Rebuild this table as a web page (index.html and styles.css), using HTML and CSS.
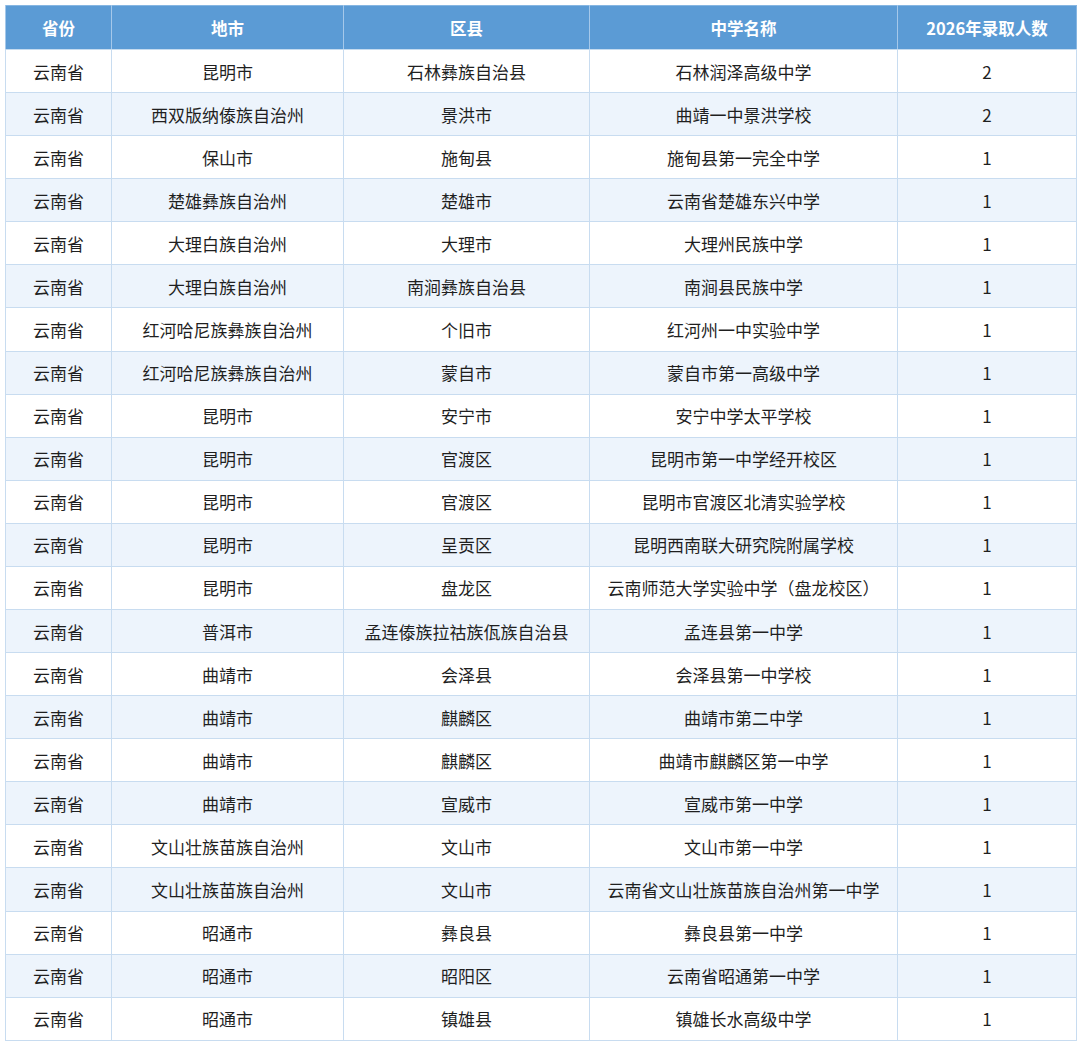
FILE: index.html
```html
<!DOCTYPE html>
<html lang="zh">
<head>
<meta charset="utf-8">
<link rel="stylesheet" href="styles.css">
</head>
<body>
<div class="wrap">
<table class="grid">
<colgroup>
<col class="c1"><col class="c2"><col class="c3"><col class="c4"><col class="c5">
</colgroup>
<thead>
<tr><th>省份</th><th>地市</th><th>区县</th><th>中学名称</th><th>2026年录取人数</th></tr>
</thead>
<tbody>
<tr><td>云南省</td><td>昆明市</td><td>石林彝族自治县</td><td>石林润泽高级中学</td><td>2</td></tr>
<tr><td>云南省</td><td>西双版纳傣族自治州</td><td>景洪市</td><td>曲靖一中景洪学校</td><td>2</td></tr>
<tr><td>云南省</td><td>保山市</td><td>施甸县</td><td>施甸县第一完全中学</td><td>1</td></tr>
<tr><td>云南省</td><td>楚雄彝族自治州</td><td>楚雄市</td><td>云南省楚雄东兴中学</td><td>1</td></tr>
<tr><td>云南省</td><td>大理白族自治州</td><td>大理市</td><td>大理州民族中学</td><td>1</td></tr>
<tr><td>云南省</td><td>大理白族自治州</td><td>南涧彝族自治县</td><td>南涧县民族中学</td><td>1</td></tr>
<tr><td>云南省</td><td>红河哈尼族彝族自治州</td><td>个旧市</td><td>红河州一中实验中学</td><td>1</td></tr>
<tr><td>云南省</td><td>红河哈尼族彝族自治州</td><td>蒙自市</td><td>蒙自市第一高级中学</td><td>1</td></tr>
<tr><td>云南省</td><td>昆明市</td><td>安宁市</td><td>安宁中学太平学校</td><td>1</td></tr>
<tr><td>云南省</td><td>昆明市</td><td>官渡区</td><td>昆明市第一中学经开校区</td><td>1</td></tr>
<tr><td>云南省</td><td>昆明市</td><td>官渡区</td><td>昆明市官渡区北清实验学校</td><td>1</td></tr>
<tr><td>云南省</td><td>昆明市</td><td>呈贡区</td><td>昆明西南联大研究院附属学校</td><td>1</td></tr>
<tr><td>云南省</td><td>昆明市</td><td>盘龙区</td><td>云南师范大学实验中学（盘龙校区）</td><td>1</td></tr>
<tr><td>云南省</td><td>普洱市</td><td>孟连傣族拉祜族佤族自治县</td><td>孟连县第一中学</td><td>1</td></tr>
<tr><td>云南省</td><td>曲靖市</td><td>会泽县</td><td>会泽县第一中学校</td><td>1</td></tr>
<tr><td>云南省</td><td>曲靖市</td><td>麒麟区</td><td>曲靖市第二中学</td><td>1</td></tr>
<tr><td>云南省</td><td>曲靖市</td><td>麒麟区</td><td>曲靖市麒麟区第一中学</td><td>1</td></tr>
<tr><td>云南省</td><td>曲靖市</td><td>宣威市</td><td>宣威市第一中学</td><td>1</td></tr>
<tr><td>云南省</td><td>文山壮族苗族自治州</td><td>文山市</td><td>文山市第一中学</td><td>1</td></tr>
<tr><td>云南省</td><td>文山壮族苗族自治州</td><td>文山市</td><td>云南省文山壮族苗族自治州第一中学</td><td>1</td></tr>
<tr><td>云南省</td><td>昭通市</td><td>彝良县</td><td>彝良县第一中学</td><td>1</td></tr>
<tr><td>云南省</td><td>昭通市</td><td>昭阳区</td><td>云南省昭通第一中学</td><td>1</td></tr>
<tr><td>云南省</td><td>昭通市</td><td>镇雄县</td><td>镇雄长水高级中学</td><td>1</td></tr>
</tbody>
</table>
</div>
</body>
</html>
```
FILE: styles.css
```css
html, body {
  margin: 0;
  padding: 0;
  background: #ffffff;
}
.wrap {
  padding: 5px 0 0 5px;
}
.grid {
  width: 1071px;
  border-collapse: collapse;
  table-layout: fixed;
  font-family: "Noto Sans CJK SC", "Noto Sans", sans-serif;
  font-size: 17px;
  color: #1f1f1f;
  border: 1px solid #86b6e2;
}
.c1 { width: 106px; }
.c2 { width: 232px; }
.c3 { width: 246px; }
.c4 { width: 308px; }
.c5 { width: 179px; }
.grid th {
  background: #5b9bd5;
  color: #ffffff;
  font-weight: bold;
  font-size: 16.5px;
  height: 43px;
  padding: 0;
  text-align: center;
  border-left: 1px solid #a5c8ea;
  border-bottom: 1px solid #c5dbef;
}
.grid td {
  height: 42.09px;
  padding: 0;
  text-align: center;
  border: 1px solid #c8dcf0;
}
.grid tbody tr:nth-child(even) td {
  background: #edf4fc;
}
```
